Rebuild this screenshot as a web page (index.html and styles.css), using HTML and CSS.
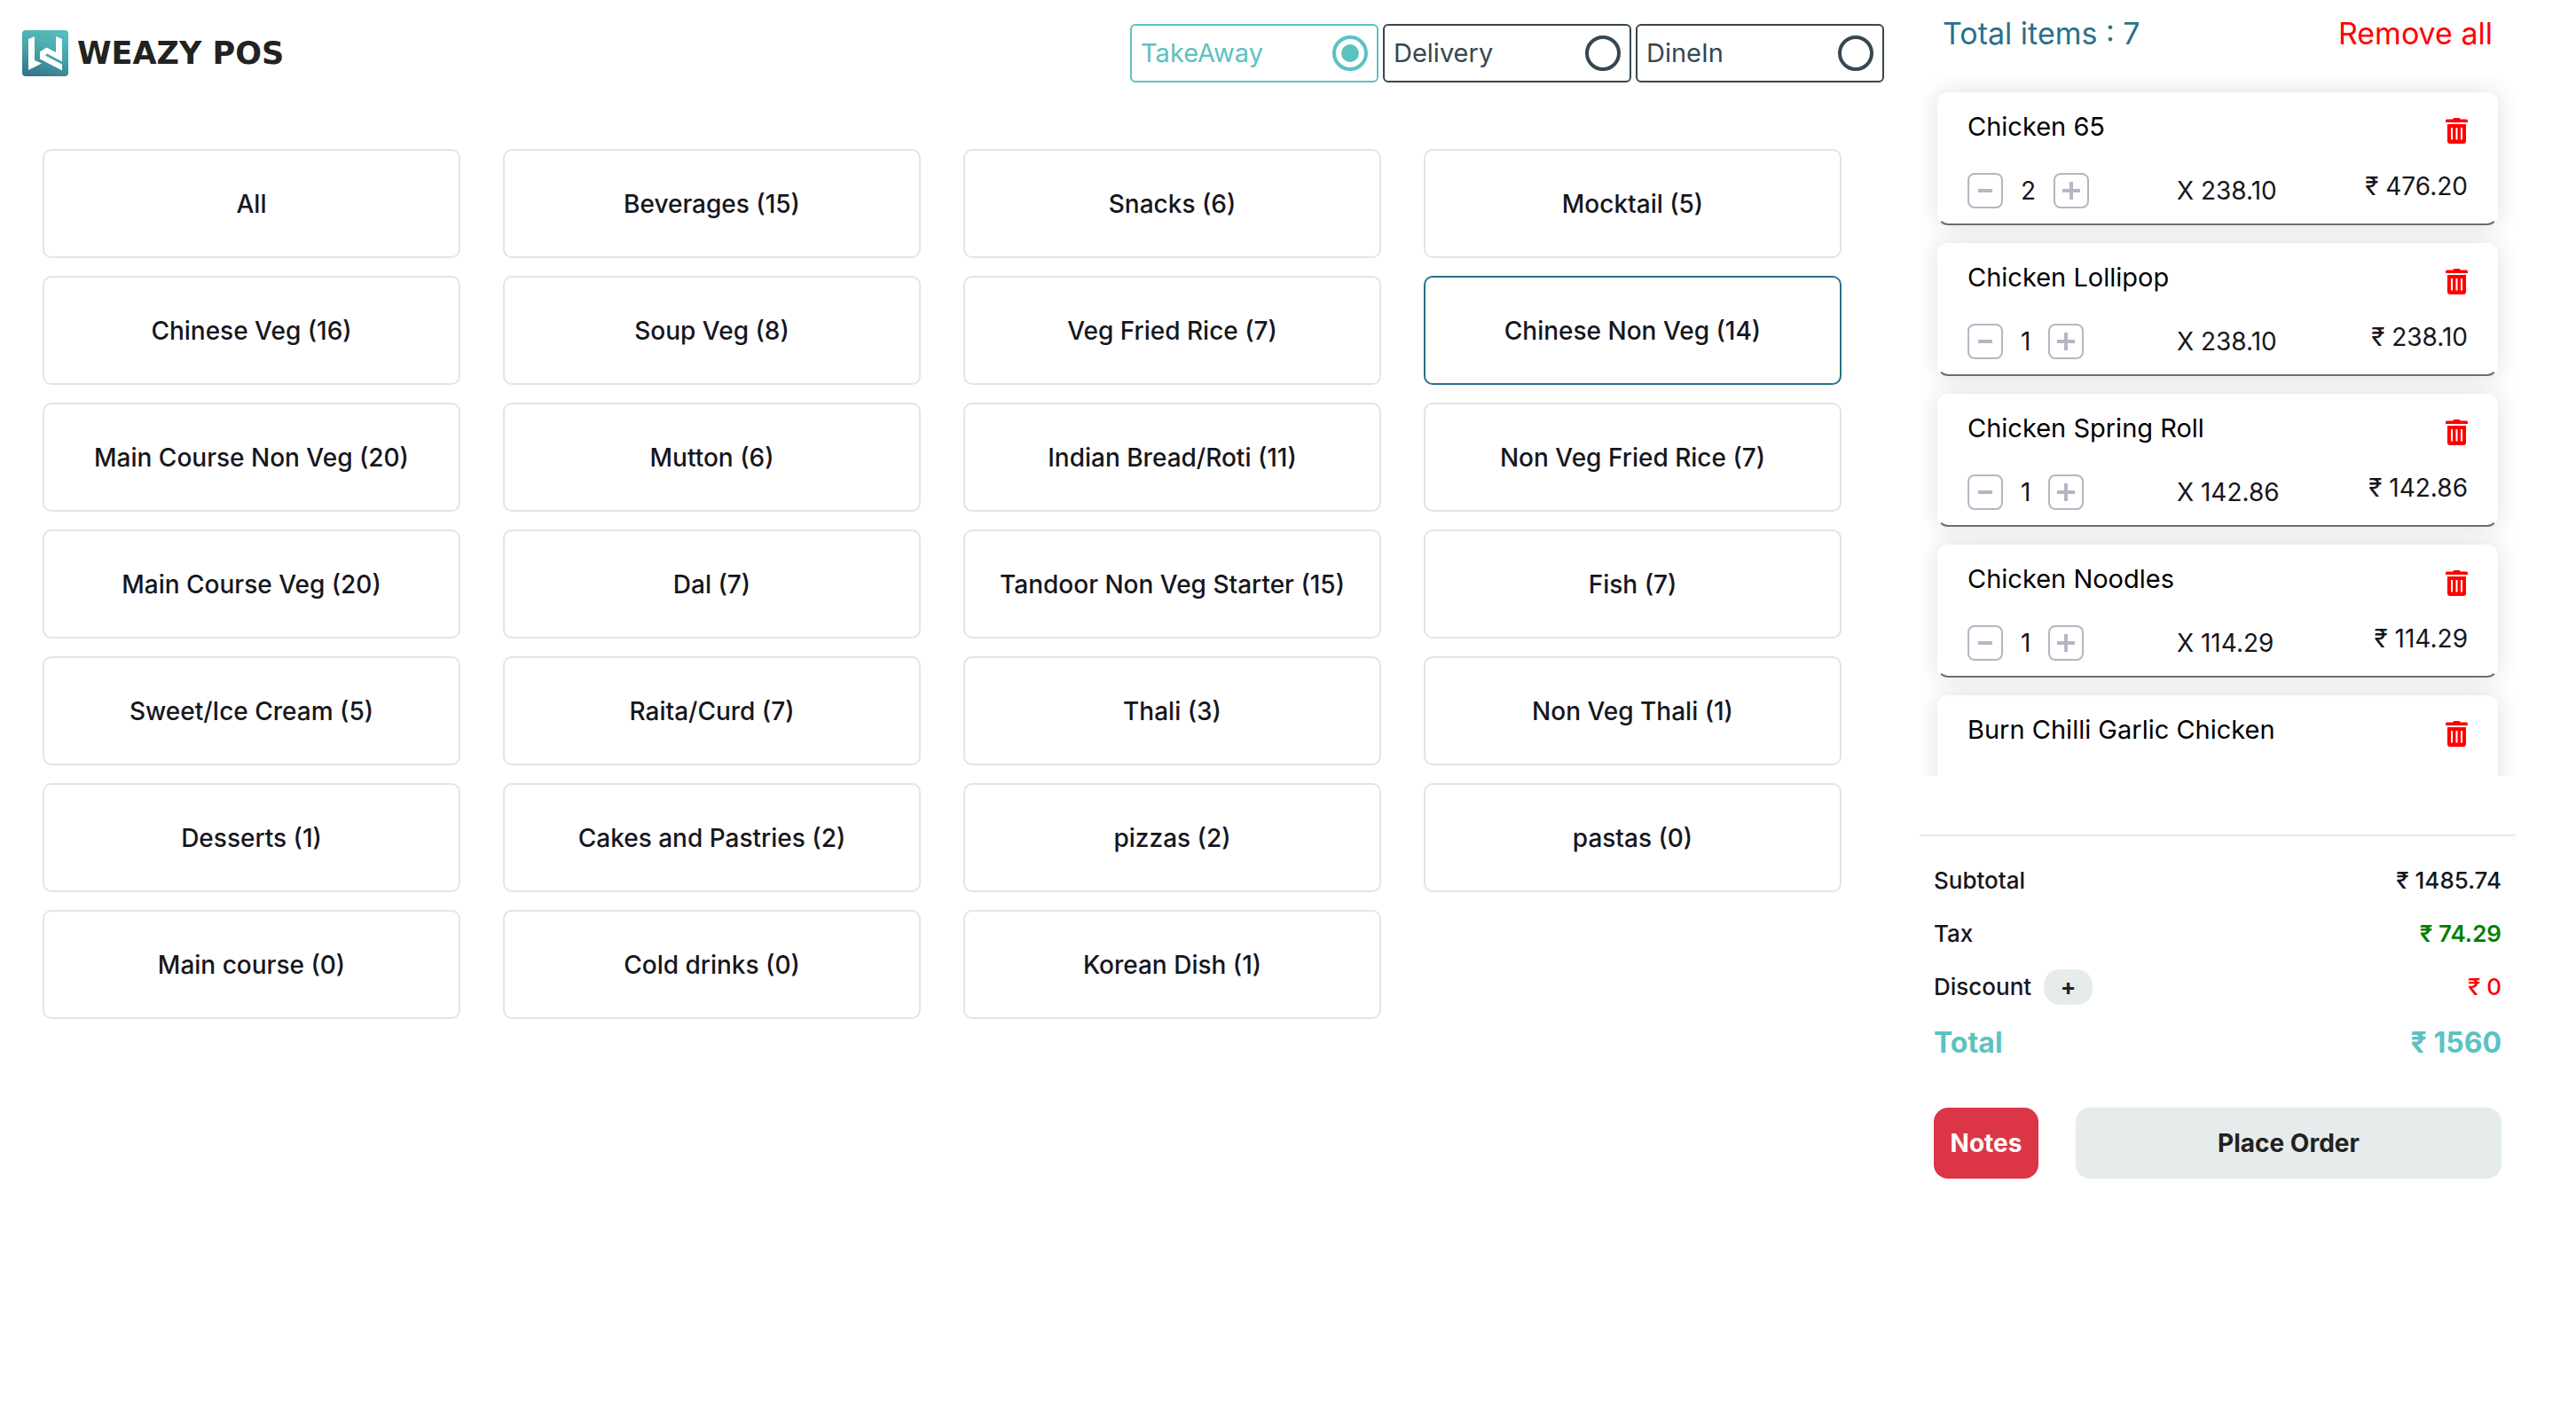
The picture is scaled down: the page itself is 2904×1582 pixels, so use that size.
FILE: index.html
```html
<!DOCTYPE html>
<html lang="en">
<head>
<meta charset="utf-8">
<meta name="viewport" content="width=device-width, initial-scale=1">
<title>Weazy POS</title>
<link rel="stylesheet" href="styles.css">
</head>
<body>
<svg class="sprite" aria-hidden="true">
  <symbol id="trash" viewBox="0 0 25 29">
    <path fill-rule="evenodd" d="M8 1.5Q8.500 0 10 0H15Q16.500 0 17 1.500H23.500Q25 1.500 25 3V4.500Q25 5 24.500 5H.5Q0 5 0 4.500V3Q0 1.500 1.500 1.500ZM2 7H23V26Q23 29 20 29H5Q2 29 2 26ZM6 11V24.500H8V11ZM11.500 11V24.500H13.500V11ZM17 11V24.500H19V11Z"/>
  </symbol>
  <symbol id="minus" viewBox="0 0 24 24"><path d="M4 10H20V14H4Z"/></symbol>
  <symbol id="plus" viewBox="0 0 24 24"><path d="M2 10H10V2H14V10H22V14H14V22H10V14H2Z"/></symbol>
</svg>
<div class="app">
  <main class="main">
    <header class="topbar">
      <a class="brand" href="#">
        <svg class="brand-icon" viewBox="0 0 52 52" aria-hidden="true">
          <defs>
            <linearGradient id="tile" x1="0.6" y1="0" x2="0.3" y2="1">
              <stop offset="0" stop-color="#55bdbb"/>
              <stop offset="0.5" stop-color="#46a3a9"/>
              <stop offset="1" stop-color="#34768e"/>
            </linearGradient>
          </defs>
          <rect width="52" height="52" rx="4" fill="url(#tile)"/>
          <path fill="#fff" d="M7 10L14 7V34L22 37.500L7 45ZM38 7L45 10V35.500L28 26.500L26 28.500L45 38.500V45.500L20 32.500V24.500L27.500 19.500L38 25Z"/>
        </svg>
        <span class="brand-name">WEAZY POS</span>
      </a>
      <div class="modes" role="radiogroup" aria-label="Order type">
        <label class="mode"><span>TakeAway</span><input type="radio" name="mode" checked></label>
        <label class="mode"><span>Delivery</span><input type="radio" name="mode"></label>
        <label class="mode"><span>DineIn</span><input type="radio" name="mode"></label>
      </div>
    </header>
    <div class="categories">
      <button class="category">All</button>
      <button class="category">Beverages (15)</button>
      <button class="category">Snacks (6)</button>
      <button class="category">Mocktail (5)</button>
      <button class="category">Chinese Veg (16)</button>
      <button class="category">Soup Veg (8)</button>
      <button class="category">Veg Fried Rice (7)</button>
      <button class="category active">Chinese Non Veg (14)</button>
      <button class="category">Main Course Non Veg (20)</button>
      <button class="category">Mutton (6)</button>
      <button class="category">Indian Bread/Roti (11)</button>
      <button class="category">Non Veg Fried Rice (7)</button>
      <button class="category">Main Course Veg (20)</button>
      <button class="category">Dal (7)</button>
      <button class="category">Tandoor Non Veg Starter (15)</button>
      <button class="category">Fish (7)</button>
      <button class="category">Sweet/Ice Cream (5)</button>
      <button class="category">Raita/Curd (7)</button>
      <button class="category">Thali (3)</button>
      <button class="category">Non Veg Thali (1)</button>
      <button class="category">Desserts (1)</button>
      <button class="category">Cakes and Pastries (2)</button>
      <button class="category">pizzas (2)</button>
      <button class="category">pastas (0)</button>
      <button class="category">Main course (0)</button>
      <button class="category">Cold drinks (0)</button>
      <button class="category">Korean Dish (1)</button>
    </div>
  </main>
  <aside class="cart">
    <div class="cart-head">
      <span class="count">Total items : 7</span>
      <button class="remove-all">Remove all</button>
    </div>
    <div class="items">
      <article class="item">
        <div class="item-top"><span>Chicken 65</span><button class="trash" aria-label="Remove"><svg><use href="#trash"/></svg></button></div>
        <div class="item-row">
          <div class="qty"><button class="step" aria-label="Less"><svg><use href="#minus"/></svg></button><span>2</span><button class="step" aria-label="More"><svg><use href="#plus"/></svg></button></div>
          <span class="unit">X 238.10</span><span class="price">₹ 476.20</span>
        </div>
      </article>
      <article class="item">
        <div class="item-top"><span>Chicken Lollipop</span><button class="trash" aria-label="Remove"><svg><use href="#trash"/></svg></button></div>
        <div class="item-row">
          <div class="qty"><button class="step" aria-label="Less"><svg><use href="#minus"/></svg></button><span>1</span><button class="step" aria-label="More"><svg><use href="#plus"/></svg></button></div>
          <span class="unit">X 238.10</span><span class="price">₹ 238.10</span>
        </div>
      </article>
      <article class="item">
        <div class="item-top"><span>Chicken Spring Roll</span><button class="trash" aria-label="Remove"><svg><use href="#trash"/></svg></button></div>
        <div class="item-row">
          <div class="qty"><button class="step" aria-label="Less"><svg><use href="#minus"/></svg></button><span>1</span><button class="step" aria-label="More"><svg><use href="#plus"/></svg></button></div>
          <span class="unit">X 142.86</span><span class="price">₹ 142.86</span>
        </div>
      </article>
      <article class="item">
        <div class="item-top"><span>Chicken Noodles</span><button class="trash" aria-label="Remove"><svg><use href="#trash"/></svg></button></div>
        <div class="item-row">
          <div class="qty"><button class="step" aria-label="Less"><svg><use href="#minus"/></svg></button><span>1</span><button class="step" aria-label="More"><svg><use href="#plus"/></svg></button></div>
          <span class="unit">X 114.29</span><span class="price">₹ 114.29</span>
        </div>
      </article>
      <article class="item">
        <div class="item-top"><span>Burn Chilli Garlic Chicken</span><button class="trash" aria-label="Remove"><svg><use href="#trash"/></svg></button></div>
      </article>
    </div>
    <div class="summary">
      <div class="line"><span>Subtotal</span><span>₹ 1485.74</span></div>
      <div class="line"><span>Tax</span><span class="tax">₹ 74.29</span></div>
      <div class="line"><span class="discount">Discount <button class="add" aria-label="Add discount">+</button></span><span class="off">₹ 0</span></div>
      <div class="line total"><span>Total</span><span>₹ 1560</span></div>
      <div class="actions">
        <button class="notes">Notes</button>
        <button class="place">Place Order</button>
      </div>
    </div>
  </aside>
</div>
</body>
</html>
```
FILE: styles.css
```css
* { box-sizing: border-box; }
body {
  margin: 0;
  background: #fff;
  color: #16161d;
  font: 400 28px/40px Inter, "Noto Sans", sans-serif;
}
button {
  margin: 0;
  padding: 0;
  border: 0;
  background: none;
  color: inherit;
  font: inherit;
  cursor: pointer;
}
.sprite { display: none; }
.app { display: flex; align-items: flex-start; padding-right: 68px; }
.main { flex: 1; min-width: 0; }
.topbar {
  display: flex;
  justify-content: space-between;
  align-items: center;
  padding: 27px 40px 0 25px;
}
.brand { display: flex; align-items: center; gap: 10px; color: #222; text-decoration: none; }
.brand-icon { width: 52px; height: 52px; }
.brand-name { font: 700 35px/36px "DejaVu Sans", sans-serif; }
.modes { display: flex; gap: 5px; }
.mode {
  display: flex;
  justify-content: space-between;
  align-items: center;
  width: 280px;
  height: 66px;
  padding: 0 10px;
  border: 2px solid currentColor;
  border-radius: 6px;
  color: #37474f;
  font-size: 29px;
}
.mode:has(:checked) { color: #5cc2c1; }
.mode input {
  appearance: none;
  width: 40px;
  height: 40px;
  margin: 0;
  border: 4px solid currentColor;
  border-radius: 50%;
  color: inherit;
}
.mode input:checked {
  padding: 6px;
  background: currentColor content-box;
}
.categories {
  display: grid;
  grid-template-columns: repeat(4, 1fr);
  gap: 20px 48px;
  padding: 75px 88px 0 48px;
}
.category {
  height: 123px;
  border: 2px solid #e4e4e4;
  border-radius: 10px;
  font-weight: 500;
}
.category.active { border-color: #2a7089; }
.cart { width: 672px; }
.cart-head {
  display: flex;
  justify-content: space-between;
  height: 84px;
  padding: 18px 26px 0;
  font-size: 34px;
}
.count { color: #2a7089; }
.remove-all { height: 40px; color: #f00; }
.items {
  height: 50vh;
  padding: 20px;
  overflow-y: auto;
  scrollbar-width: none;
}
.item {
  min-height: 150px;
  margin-bottom: 20px;
  padding: 17px 32px;
  border: 2px solid transparent;
  border-bottom-color: #6f6f6f;
  border-radius: 12px;
  box-shadow: 0 0 28px rgba(0, 0, 0, 0.13);
  color: #000;
}
.item-top { display: flex; justify-content: space-between; font-size: 29px; }
.trash { width: 25px; height: 40px; }
.trash svg { display: block; width: 25px; height: 29px; margin-top: 9px; fill: #f00; }
.item-row {
  display: grid;
  grid-template-columns: 236px 1fr auto;
  margin-top: 32px;
  color: #16161d;
}
.qty { display: flex; gap: 20px; }
.step {
  display: grid;
  place-items: center;
  width: 40px;
  height: 40px;
  border: 2px solid #b8b5c3;
  border-radius: 8px;
}
.step svg { width: 24px; height: 24px; fill: #b8b5c3; }
.price { margin-top: -5px; }
.summary {
  margin-top: 66px;
  padding: 20px 16px 0;
  border-top: 2px solid #e9e9e9;
  font-size: 26px;
  font-weight: 500;
}
.line { display: flex; justify-content: space-between; align-items: center; height: 60px; }
.discount { display: flex; align-items: center; gap: 14px; }
.add {
  width: 55px;
  height: 40px;
  border-radius: 18px;
  background: #e6ecec;
  color: #222;
  font-weight: 700;
}
.tax { color: green; font-weight: 600; }
.off { color: #f00; }
.total { height: 66px; color: #5cc2c1; font-size: 32px; font-weight: 700; }
.actions { display: flex; gap: 42px; margin-top: 40px; font-size: 28px; font-weight: 700; }
.actions button { height: 80px; border-radius: 16px; }
.notes { width: 118px; background: #dc3545; color: #fff; }
.place { flex: 1; background: #e6ecec; color: #222; }
```
